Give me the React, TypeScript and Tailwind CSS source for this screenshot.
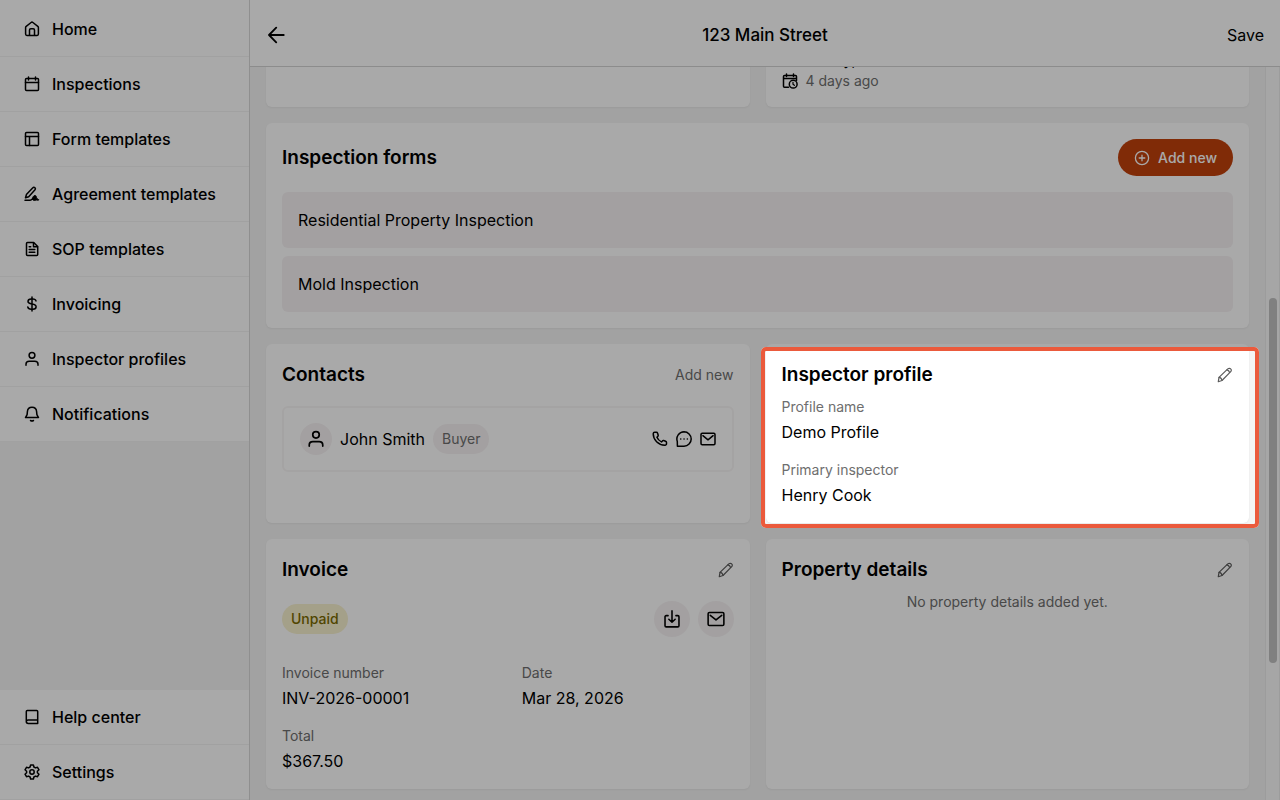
import React from 'react';

type IconProps = { className?: string; strokeWidth?: number; children?: React.ReactNode };

const Icon = ({ className = 'h-4 w-4', strokeWidth = 1.5, children }: IconProps) => (
  <svg
    viewBox="0 0 16 16"
    className={`shrink-0 ${className}`}
    fill="none"
    stroke="currentColor"
    strokeWidth={strokeWidth}
    strokeLinecap="round"
    strokeLinejoin="round"
    aria-hidden="true"
  >
    {children}
  </svg>
);

const HomeIcon = () => (
  <Icon>
    <path d="M1.600 6.600c0-.6.200-1 .6-1.300L7.100 1.500c.5-.4 1.300-.4 1.800 0l4.900 3.800c.4.300.6.700.6 1.300v6.500c0 .8-.5 1.300-1.300 1.300H2.900c-.8 0-1.300-.5-1.300-1.300Z" />
    <path d="M5.500 14.200V9c0-.8.500-1.300 1.300-1.300h2.400c.8 0 1.300.5 1.300 1.300v5.200" />
  </Icon>
);

const CalendarIcon = () => (
  <Icon>
    <rect x="1.500" y="2.500" width="13" height="12" rx="1" />
    <path d="M1.500 6.500h13M4.500 1v3M11.500 1v3" />
  </Icon>
);

const LayoutIcon = () => (
  <Icon>
    <rect x="1.500" y="1.500" width="13" height="13" rx="1" />
    <path d="M1.500 5.500h13M5.500 5.500v9" />
  </Icon>
);

const SignatureIcon = () => (
  <Icon>
    <path d="M2.400 8.600 8.600 2c.8-.8 1.700-.8 2.300-.2.600.6.600 1.500-.1 2.300L4.700 10.700l-3.200 1Z" />
    <path d="M1 14.200h5.200c2.700 0 2.800-3.400 4.500-3.400" />
    <path
      d="M8.500 13.300c0-2.100 1-3.900 2.500-3.900 1.200 0 1.600 1.300 1.500 2.800.7-.2 1 .3 1.200.7.300.600.700.900 1.400.7-.7 1-1.700.900-2.300.400-1.300.8-4.300.700-4.300-.7Z"
      fill="currentColor"
      strokeWidth="0.8"
    />
  </Icon>
);

const DocumentIcon = () => (
  <Icon>
    <path d="M3.500 1.500h6.200l4 4v8c0 .6-.4 1-1 1h-9.200c-.6 0-1-.4-1-1v-11c0-.6.400-1 1-1Z" />
    <path d="M9.500 1.700v4h4M5.200 5.700h1.500M5.200 8.500h5.600M5.200 11.300h5.600" />
  </Icon>
);

const DollarIcon = () => (
  <Icon>
    <path d="M8 1v14M12 4.900c-.3-1.300-1.500-2-3.200-2H7.200C5.300 2.900 4 3.800 4 5.400c0 1.700 1.400 2.100 4 2.600 2.700.5 4.100 1 4.100 2.700 0 1.600-1.400 2.500-3.200 2.500H7.200c-1.900 0-3.100-.8-3.400-2.200" />
  </Icon>
);

const PersonIcon = ({ className, strokeWidth }: IconProps) => (
  <Icon className={className} strokeWidth={strokeWidth}>
    <circle cx="8" cy="4.300" r="2.900" />
    <path d="M2 14.300v-1c0-1.900 1.300-3 3.200-3h5.600c1.900 0 3.200 1.100 3.200 3v1" />
  </Icon>
);

const BellIcon = () => (
  <Icon>
    <path d="M8 1.300c-2.600 0-4.400 1.700-4.600 4.300l-.3 3-1.600 3h13l-1.600-3-.3-3C12.400 3 10.600 1.300 8 1.300Z" />
    <path d="M6.500 14.500c.9.500 2.100.5 3 0" />
  </Icon>
);

const BookIcon = () => (
  <Icon>
    <path d="M13.700 14.400H4.200c-1.100 0-1.900-.8-1.900-1.900V2.500c0-.6.4-1 1-1h9.400c.6 0 1 .4 1 1ZM2.300 12.500c0-1 .8-1.600 1.900-1.600h9.500" />
  </Icon>
);

const GearIcon = () => (
  <Icon>
    <path d="M6.600 1h2.800l.5 2 1.600.9 2-.6 1.500 2.500-1.600 1.400v1.600l1.600 1.400-1.500 2.500-2-.6-1.600.9-.5 2H6.600l-.5-2-1.600-.9-2 .6L1 10.200l1.600-1.400V7.200L1 5.800l1.500-2.500 2 .6L6.100 3Z" />
    <circle cx="8" cy="8" r="2.200" />
  </Icon>
);

const BackIcon = () => (
  <Icon className="ml-0.5 h-[18px] w-[18px]" strokeWidth={1.600}>
    <path d="M14 8H1.500M7.300 1.500.9 8l6.400 6.500" />
  </Icon>
);

const CalendarClockIcon = () => (
  <Icon>
    <path d="M6.500 14.300H2.500c-.6 0-1-.4-1-1V3.500c0-.6.400-1 1-1h11c.6 0 1 .4 1 1v4M1.500 5.500h13M4.500 1v2.500M11.500 1v2.500" />
    <circle cx="11.200" cy="11.200" r="3.900" />
    <path d="M11 9.300v2l1.400 1" strokeWidth="1.200" />
  </Icon>
);

const PlusCircleIcon = () => (
  <Icon strokeWidth={1.300}>
    <circle cx="8" cy="8" r="6.600" />
    <path d="M8 5.200v5.600M5.200 8h5.600" />
  </Icon>
);

const PencilIcon = () => (
  <Icon strokeWidth={1.200}>
    <path d="m1.300 14.700.7-4.300L10.800 1.900c.9-.8 2.200-.8 2.900 0 .8.800.8 2 0 2.800L5 13.500Z" />
    <path d="M2 10.400c1.600.2 2.700 1.300 3 3.100M9.900 2.800c1.400.3 2.300 1.200 2.700 2.700" />
  </Icon>
);

const PhoneIcon = () => (
  <Icon>
    <path d="M1.200 2.800c0-.9.600-1.500 1.500-1.500h1.700c.6 0 1 .3 1.200.9l.6 2c.1.500 0 .9-.4 1.200l-.9.800c.9 2 2.400 3.600 4.600 4.700l.9-1c.3-.4.700-.5 1.200-.4l2 .7c.6.200.9.600.9 1.200v1.300c0 .9-.7 1.600-1.600 1.500C6.200 13.800 1.300 9 1.200 2.800Z" />
  </Icon>
);

const ChatIcon = () => (
  <Icon>
    <path d="M8 .8a7.200 7.200 0 1 1 0 14.400H1.400l-.1-4.800A7.200 7.200 0 0 1 8 .8Z" />
    <path d="M4.700 8h.1M8 8h.1M11.300 8h.1" />
  </Icon>
);

const MailIcon = ({ className, strokeWidth }: IconProps) => (
  <Icon className={className} strokeWidth={strokeWidth}>
    <rect x="1" y="2.200" width="14" height="11.600" rx="1.200" />
    <path d="M2.900 4.700 8 8.800l5.100-4.100" />
  </Icon>
);

const DownloadIcon = () => (
  <Icon className="h-[18px] w-[18px]" strokeWidth={1.400}>
    <path d="M4.500 5H2.800c-.6 0-1 .4-1 1v8c0 .6.400 1 1 1h10.400c.6 0 1-.4 1-1V6c0-.6-.4-1-1-1h-1.700M8 .8v10M5.200 8.200 8 10.900l2.800-2.700" />
  </Icon>
);

const navItems = [
  { name: 'Home', icon: HomeIcon },
  { name: 'Inspections', icon: CalendarIcon },
  { name: 'Form templates', icon: LayoutIcon },
  { name: 'Agreement templates', icon: SignatureIcon },
  { name: 'SOP templates', icon: DocumentIcon },
  { name: 'Invoicing', icon: DollarIcon },
  { name: 'Inspector profiles', icon: PersonIcon },
  { name: 'Notifications', icon: BellIcon },
];

const footerItems = [
  { name: 'Help center', icon: BookIcon },
  { name: 'Settings', icon: GearIcon },
];

const NavList = ({ items }: { items: typeof navItems }) => (
  <ul className="bg-white">
    {items.map(({ name, icon: ItemIcon }) => (
      <li key={name}>
        <a href="#" className="flex h-[55px] items-center gap-3 border-b border-[#f3f3f3] px-6 text-base font-medium">
          <ItemIcon />
          {name}
        </a>
      </li>
    ))}
  </ul>
);

const Card = ({ className = '', children }: { className?: string; children?: React.ReactNode }) => (
  <section className={`rounded-md bg-white p-4 shadow-xs ${className}`}>{children}</section>
);

const CardTitle = ({ title, children }: { title: string; children?: React.ReactNode }) => (
  <div className="flex min-h-[30px] items-center justify-between">
    <h2 className="text-[19px] leading-7 font-semibold">{title}</h2>
    {children}
  </div>
);

const EditButton = ({ label }: { label: string }) => (
  <button aria-label={label} className="text-[#5c5c5c]">
    <PencilIcon />
  </button>
);

const Field = ({ label, value }: { label: string; value: string }) => (
  <div className="flex flex-col gap-0.5">
    <dt className="text-sm leading-[22px] text-[#6e6e6e]">{label}</dt>
    <dd className="text-base leading-6">{value}</dd>
  </div>
);

// Dims everything on the page except the card it sits in
const Spotlight = () => (
  <div className="pointer-events-none absolute top-[3px] -right-[10px] -bottom-[5px] -left-[5px] z-20 rounded-[5px] border-4 border-[#eb5a3c] shadow-[0_0_0_9999px_rgba(0,0,0,0.337)]" />
);

const App = () => {
  return (
    <div className="flex h-screen overflow-hidden bg-[#f4f4f4] text-black" style={{ fontFamily: 'Inter, sans-serif' }}>
      {/* Sidebar */}
      <nav className="flex w-[250px] shrink-0 flex-col justify-between border-r border-[#d8d8d8]">
        <div className="bg-white pt-0.5">
          <NavList items={navItems} />
        </div>
        <NavList items={footerItems} />
      </nav>

      <div className="flex min-w-0 flex-1 flex-col">
        {/* Header */}
        <header className="relative z-10 grid h-[67px] shrink-0 grid-cols-[1fr_auto_1fr] items-center border-b border-[#d4d4d4] bg-white px-4 pt-1">
          <button aria-label="Back" className="justify-self-start">
            <BackIcon />
          </button>
          <h1 className="text-[17px] leading-6 font-medium">123 Main Street</h1>
          <button className="justify-self-end text-base">Save</button>
        </header>

        <div className="flex min-h-0 flex-1">
          <main className="-mt-[60px] flex min-w-0 flex-1 flex-col gap-4 px-4">
            <div className="grid shrink-0 grid-cols-2 gap-4">
              <Card className="min-h-[100px]" />
              <Card className="flex flex-col justify-end">
                <p className="pl-6 text-base leading-6">Friday, Mar 27</p>
                <p className="flex items-center gap-2 text-sm leading-5">
                  <CalendarClockIcon />
                  <span className="text-[#6e6e6e]">4 days ago</span>
                </p>
              </Card>
            </div>

            {/* Inspection forms */}
            <Card className="shrink-0">
              <CardTitle title="Inspection forms">
                <button className="flex h-[37px] items-center gap-2 rounded-full bg-[#c2410c] px-4 text-sm font-medium text-white">
                  <PlusCircleIcon />
                  Add new
                </button>
              </CardTitle>
              <ul className="mt-4 flex flex-col gap-2">
                <li className="flex h-14 items-center rounded-md bg-[#f6f2f3] px-4 text-base">Residential Property Inspection</li>
                <li className="flex h-14 items-center rounded-md bg-[#f6f2f3] px-4 text-base">Mold Inspection</li>
              </ul>
            </Card>

            <div className="grid shrink-0 grid-cols-2 gap-4">
              {/* Contacts */}
              <Card>
                <CardTitle title="Contacts">
                  <button className="text-sm text-[#6e6e6e]">Add new</button>
                </CardTitle>
                <div className="mt-4 flex h-[66px] items-center rounded-md border-2 border-[#f8f6f6] px-4">
                  <span className="flex h-8 w-8 items-center justify-center rounded-full bg-[#f6f2f3]">
                    <PersonIcon className="h-[18px] w-[18px]" />
                  </span>
                  <span className="ml-2 text-base">John Smith</span>
                  <span className="ml-2 rounded-full bg-[#f6f2f3] px-[9px] text-sm leading-[30px] text-[#6e6e6e]">Buyer</span>
                  <div className="ml-auto flex items-center gap-2">
                    <button aria-label="Call">
                      <PhoneIcon />
                    </button>
                    <button aria-label="Message">
                      <ChatIcon />
                    </button>
                    <button aria-label="Email">
                      <MailIcon />
                    </button>
                  </div>
                </div>
              </Card>

              {/* Inspector profile */}
              <Card className="relative">
                <CardTitle title="Inspector profile">
                  <EditButton label="Edit inspector profile" />
                </CardTitle>
                <dl className="mt-1.5 flex flex-col gap-[15px]">
                  <Field label="Profile name" value="Demo Profile" />
                  <Field label="Primary inspector" value="Henry Cook" />
                </dl>
                <Spotlight />
              </Card>
            </div>

            <div className="grid shrink-0 grid-cols-2 gap-4">
              {/* Invoice */}
              <Card>
                <CardTitle title="Invoice">
                  <EditButton label="Edit invoice" />
                </CardTitle>
                <div className="mt-4 flex items-center gap-2">
                  <span className="mr-auto rounded-full bg-[#f8f1cf] px-[9px] text-sm leading-[30px] font-medium text-[#7a6a00]">Unpaid</span>
                  <button aria-label="Download" className="flex h-9 w-9 items-center justify-center rounded-full bg-[#f6f2f3]">
                    <DownloadIcon />
                  </button>
                  <button aria-label="Send" className="flex h-9 w-9 items-center justify-center rounded-full bg-[#f6f2f3]">
                    <MailIcon className="h-[18px] w-[18px]" strokeWidth={1.400} />
                  </button>
                </div>
                <dl className="mt-[25px] grid grid-cols-2 gap-x-7 gap-y-[15px]">
                  <Field label="Invoice number" value="INV-2026-00001" />
                  <Field label="Date" value="Mar 28, 2026" />
                  <Field label="Total" value="$367.50" />
                </dl>
              </Card>

              {/* Property details */}
              <Card>
                <CardTitle title="Property details">
                  <EditButton label="Edit property details" />
                </CardTitle>
                <p className="mt-1.5 text-center text-sm leading-[22px] text-[#6e6e6e]">No property details added yet.</p>
              </Card>
            </div>
          </main>

          {/* Scroll track */}
          <div className="flex w-[15px] shrink-0 flex-col items-center border-x border-[#ececec] bg-[#fafafa]">
            <div className="flex-[231]" />
            <div className="w-2 flex-[365] rounded-full bg-[#c1c1c1]" />
            <div className="flex-[137]" />
          </div>
        </div>
      </div>
    </div>
  );
};

export default App;
